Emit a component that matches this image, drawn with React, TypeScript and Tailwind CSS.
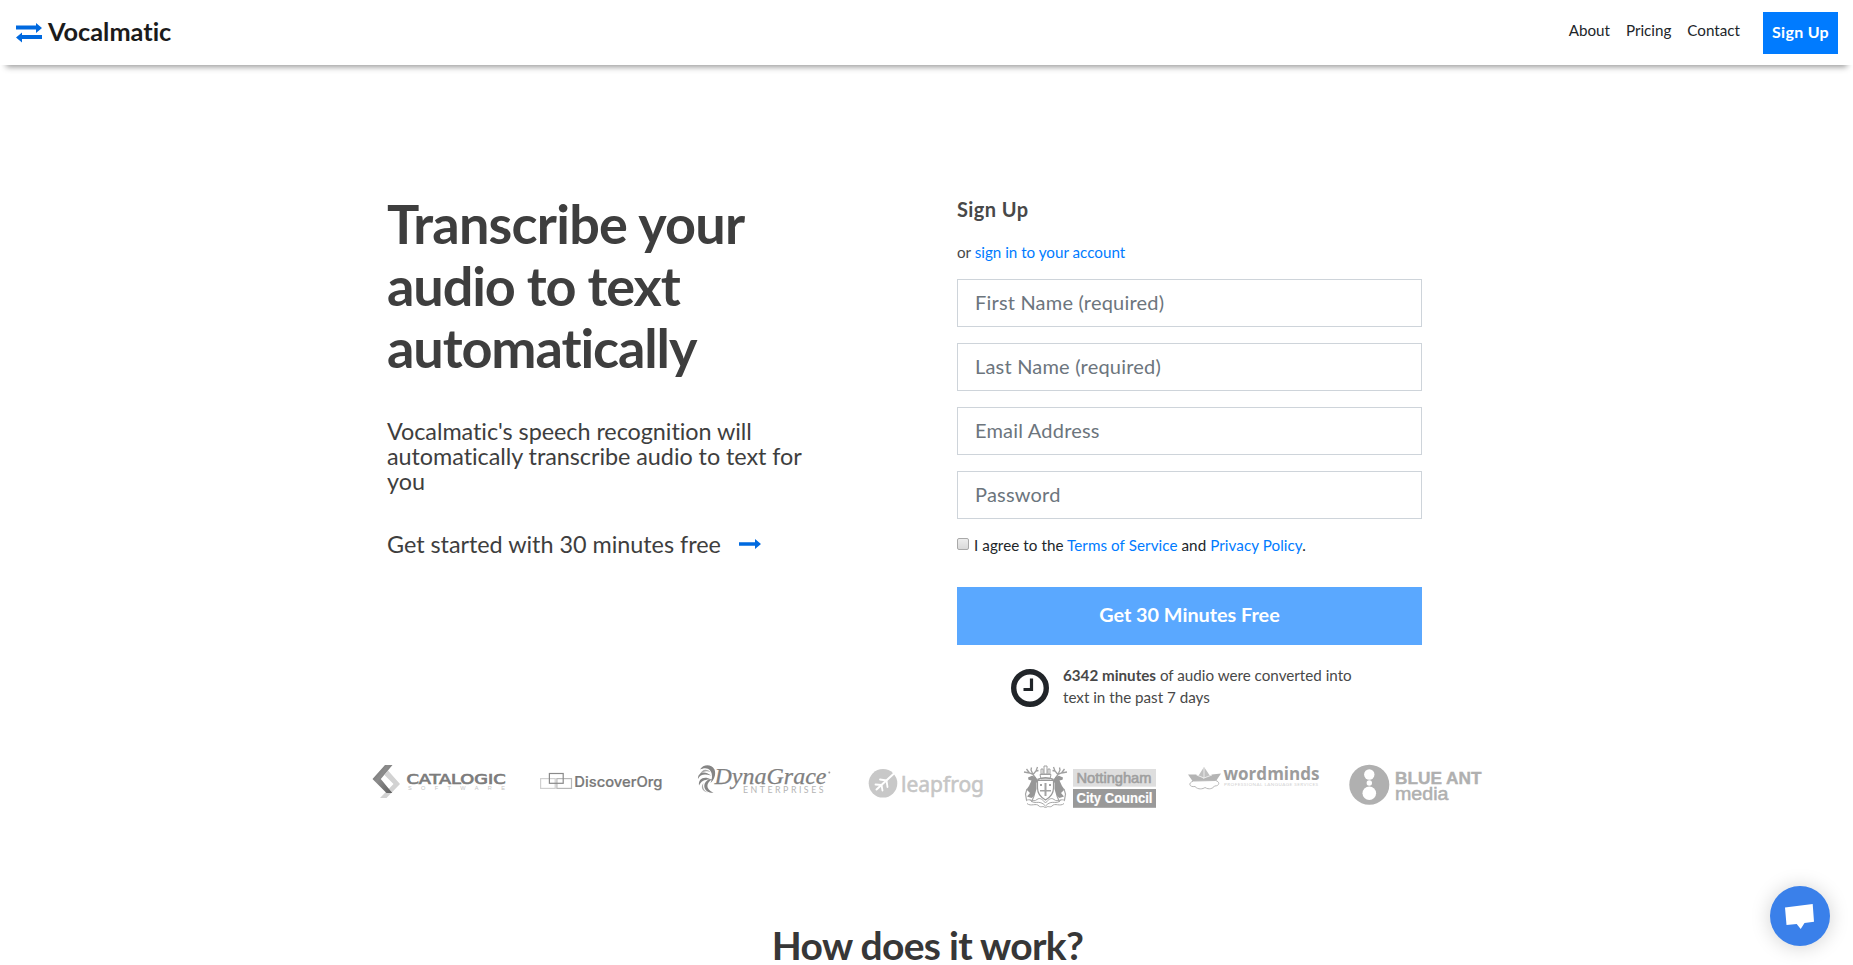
import type { ReactNode } from "react";

function Logo({ x, w, label, children }: { x: number; w: number; label: string; children: ReactNode }) {
  return (
    <svg width={w} height={48} viewBox={`${x} 764 ${w} 48`} role="img" aria-label={label} className="shrink-0">
      {children}
    </svg>
  );
}

function Catalogic() {
  return (
    <Logo x={370} w={138} label="Catalogic Software">
      <defs>
        <linearGradient id="cat" x1="0" x2="1" y1="0" y2="1">
          <stop offset="0" stopColor="#6c6c6c" />
          <stop offset="0.4" stopColor="#8c8c8c" />
          <stop offset="1" stopColor="#5e5e5e" />
        </linearGradient>
      </defs>
      <path d="M388 770.5L400 784L386.5 798H380L393.5 784L384.5 775Z" fill="#d2d2d2" />
      <path d="M385 765H392.5L380.8 779L392.3 793H386.5L372.5 779Z" fill="url(#cat)" />
      <text x="406.5" y="784" fontSize="13.2" fontFamily="DejaVu Sans" fill="#7c7c7c" stroke="#7c7c7c" strokeWidth=".7" textLength="99" lengthAdjust="spacingAndGlyphs">CATALOGIC</text>
      <text x="408" y="790.3" fontSize="5.6" fontFamily="Liberation Sans" fill="#c4c4c4" textLength="97">SOFTWARE</text>
    </Logo>
  );
}

function DiscoverOrg() {
  return (
    <Logo x={538} w={126} label="DiscoverOrg">
      <g fill="none" strokeWidth="1.2">
        <rect x="540.6" y="778.6" width="14.6" height="9.8" stroke="#d0d0d0" />
        <rect x="556.9" y="778.6" width="14.6" height="9.8" stroke="#b8b8b8" />
        <rect x="549.4" y="773.5" width="13.8" height="9.8" stroke="#8a8a8a" />
      </g>
      <text x="574.3" y="787" fontSize="14.6" fontWeight="500" fontFamily="Inter" fill="#787878" stroke="#787878" strokeWidth=".2" textLength="88" lengthAdjust="spacingAndGlyphs">DiscoverOrg</text>
    </Logo>
  );
}

function DynaGrace() {
  return (
    <Logo x={696} w={138} label="DynaGrace Enterprises">
      <g fill="#858585">
        <path d="M700 769.5C703 764.5 711 763.5 714.5 769.5C716 773.5 715 779 710.5 783C713 777 712.500 771 708 768.700C705.500 767.600 702.500 768.200 700 769.500Z" />
        <path d="M698 779C697.500 773 704 769.500 711 775.500C705 773.500 700 774 698 779Z" />
        <path d="M700 775C701 770 706 768 710.500 772C706 770.500 703 771.500 700 775Z" opacity=".7" />
        <path d="M699 785.500C698 779 704 775.500 711 779.500C705 779 701 781 699 785.500Z" />
        <path d="M712.500 779C706 783 705 789 713.500 792.800C705 793.500 700.500 784.500 708.500 779.500Z" />
        <path d="M703.500 783C702 787 704 791 708 792.500C702.500 792 700 787 703.500 783Z" opacity=".7" />
      </g>
      <text x="714.5" y="783.8" fontSize="24" fontStyle="italic" fontFamily="Liberation Serif" fill="#808080" stroke="#808080" strokeWidth=".25" textLength="112" lengthAdjust="spacingAndGlyphs">DynaGrace</text>
      <circle cx="829.3" cy="772.6" r="1" fill="#999" />
      <text x="743" y="792.7" fontSize="8.8" fontFamily="Lato" fill="#b4b4b4" textLength="80.500">ENTERPRISES</text>
    </Logo>
  );
}

function Leapfrog() {
  return (
    <Logo x={867} w={118} label="leapfrog">
      <circle cx="883" cy="783.3" r="14.3" fill="#c8c8c8" />
      <g fill="none" stroke="#fff" strokeLinecap="round" strokeLinejoin="round">
        <path d="M876.500 789.500L894 773.500" strokeWidth="2" />
        <path d="M880 779.500L886.500 780.500L887.500 787" strokeWidth="1.8" />
        <path d="M875.500 784.500L881.500 785L882.500 790.500" strokeWidth="1.8" />
      </g>
      <text x="901" y="791.5" fontSize="22" fontFamily="Noto Sans" fill="#c6c6c6" stroke="#c6c6c6" strokeWidth=".6" textLength="83" lengthAdjust="spacingAndGlyphs">leapfrog</text>
    </Logo>
  );
}

function CrestSide() {
  return (
    <g>
      <path d="M1035.500 778L1033 774.500L1029.500 773L1024 772M1033 774.500L1031 770L1031.500 767.500M1029.500 773L1026.500 769M1033.500 774L1036 771L1037.500 767M1036 771L1038.500 770.500" fill="none" stroke="#a0a0a0" strokeWidth="1.3" />
      <path d="M1028 777.500L1032 775.800L1035.500 777L1038 780L1036.500 783V789L1034.500 796L1031.500 798L1027 796.500L1030 793L1026.500 789.500L1029 786L1031.500 780.500L1028.500 779.800Z" fill="#979797" />
      <path d="M1027 789L1025.500 794L1026.500 800M1034 796L1031.500 802" fill="none" stroke="#a6a6a6" strokeWidth="1.2" />
      <path d="M1026 801C1029 797.500 1033 803 1037 799.500C1040 797 1043 800 1045.500 803M1027 803.500C1031 807 1036 802.500 1039 806C1041 808 1043.500 805 1045.500 808M1030 799.500C1034 806 1039 798.500 1045.500 806" fill="none" stroke="#a8a8a8" strokeWidth="1" />
    </g>
  );
}

function Nottingham() {
  return (
    <Logo x={1020} w={138} label="Nottingham City Council">
      <CrestSide />
      <g transform="translate(2091 0) scale(-1 1)">
        <CrestSide />
      </g>
      <path d="M1037.500 780.500H1053.500V788C1053.500 794 1050 797.500 1045.500 800C1041 797.500 1037.500 794 1037.500 788Z" fill="#fff" stroke="#999" strokeWidth="1.2" />
      <path d="M1044.500 783V790H1040V791.500H1044.500V796H1046.500V791.500H1051V790H1046.500V783ZM1040 784H1042V786H1040ZM1049 784H1051V786H1049Z" fill="#a4a4a4" />
      <path d="M1040 774.500H1051L1050 779H1041ZM1041 769H1043V774H1041ZM1048 769H1050V774H1048ZM1044 766H1047V774H1044Z" fill="none" stroke="#a0a0a0" strokeWidth="1" />
      <path d="M1037.500 779.500Q1045.500 776 1053.500 779.500" fill="none" stroke="#999" strokeWidth="1.4" />
      <rect x="1073" y="769" width="83" height="17.700" fill="#dedede" />
      <rect x="1073" y="789" width="83" height="18.800" fill="#999" />
      <text x="1076.500" y="782.700" fontSize="14.5" fontFamily="Liberation Sans" fill="#9f9f9f" stroke="#9f9f9f" strokeWidth=".6" textLength="75" lengthAdjust="spacingAndGlyphs">Nottingham</text>
      <text x="1076.500" y="802.900" fontSize="14.5" fontWeight="700" fontFamily="Liberation Sans" fill="#fff" stroke="#fff" strokeWidth=".2" textLength="76" lengthAdjust="spacingAndGlyphs">City Council</text>
    </Logo>
  );
}

function Wordminds() {
  return (
    <Logo x={1186} w={136} label="wordminds professional language services">
      <path d="M1204 767L1211.500 778H1197Z" fill="#c0c0c0" />
      <path d="M1188 774.500L1196 774.500L1203.500 778.500L1212 774.500L1221 773.500L1216 781H1192.500Z" fill="#b4b4b4" />
      <path d="M1204 768V778L1196.500 775M1204 778L1212 775" fill="none" stroke="#efefef" strokeWidth=".9" />
      <path d="M1193.500 781C1187.500 783 1189.500 787.500 1195 786.500C1198 790 1203 789 1205 787.500C1209 790 1213 788.500 1214.500 786C1220 786 1220 781.500 1215.500 780.500Z" fill="#fff" stroke="#b8b8b8" strokeWidth="1" />
      <text x="1223.500" y="780.200" fontSize="17.800" fontWeight="700" fontFamily="Open Sans" fill="#9c9c9c" textLength="96" lengthAdjust="spacingAndGlyphs">wordminds</text>
      <text x="1224" y="786.300" fontSize="4.600" fontFamily="Lato" fill="#d0d0d0" textLength="94">PROFESSIONAL LANGUAGE SERVICES</text>
    </Logo>
  );
}

function BlueAnt() {
  return (
    <Logo x={1347} w={138} label="Blue Ant Media">
      <circle cx="1369.300" cy="784.700" r="20" fill="#b0b0b0" />
      <circle cx="1369.300" cy="774.500" r="5.200" fill="#fff" />
      <circle cx="1369.300" cy="783" r="2.700" fill="#fff" />
      <circle cx="1369.300" cy="793.300" r="6.800" fill="#fff" />
      <text x="1395" y="784.200" fontSize="17.300" fontWeight="700" fontFamily="Liberation Sans" fill="#b0b0b0" stroke="#b0b0b0" strokeWidth=".4" textLength="86.500" lengthAdjust="spacingAndGlyphs">BLUE ANT</text>
      <text x="1395" y="800" fontSize="18" fontFamily="Liberation Sans" fill="#b0b0b0" stroke="#b0b0b0" strokeWidth=".5" textLength="53.500" lengthAdjust="spacingAndGlyphs">media</text>
    </Logo>
  );
}

const fields = ["First Name (required)", "Last Name (required)", "Email Address", "Password"];

export default function App() {
  return (
    <div className="relative flex h-[965px] w-full flex-col overflow-hidden bg-white font-['Lato',sans-serif] text-[15.2px] text-[#212529] [font-variant-ligatures:none]">
      <header className="flex h-[65px] shrink-0 items-start justify-between pr-[15px] pl-4 shadow-[0_8px_6px_-6px_#999]">
        <a className="flex items-start gap-1.5 pt-4">
          <svg width="26" height="20" viewBox="0 0 26 20" fill="#0069df" className="mt-[7px]">
            <path d="M0 2.500H20V0L26 5L20 10V6.500H0Z" />
            <path d="M26 12H6V9.500L0 14.500L6 19.500V16H26Z" />
          </svg>
          <span className="text-[25.3px] leading-[30px] font-bold text-[#1b1b1b]">Vocalmatic</span>
        </a>
        <nav className="flex items-start pt-3">
          <a className="mr-4 pt-[7px] leading-[23px]">About</a>
          <a className="mr-4 pt-[7px] leading-[23px]">Pricing</a>
          <a className="mr-[23px] pt-[7px] leading-[23px]">Contact</a>
          <a className="flex h-[42px] w-[75px] items-center justify-center bg-[#007bff] pb-0.5 text-base font-bold tracking-[0.3px] text-white">
            Sign Up
          </a>
        </nav>
      </header>

      <main className="flex flex-col">
        <section className="flex gap-[150px] pt-[126px] pl-[387px]">
          <div className="w-[420px] text-[#3e3e3e]">
            <h1 className="pt-0.5 text-[54px] leading-[62px] font-bold tracking-[-1.1px]">
              <span className="tracking-[-0.75px]">Transcribe your</span>
              <br />
              audio to text
              <br />
              automatically
            </h1>
            <p className="mt-10 text-[23.4px] leading-[25.2px] tracking-[-0.05px]">
              Vocalmatic's speech recognition will automatically transcribe audio to text for you
            </p>
            <p className="mt-[37px] flex items-center text-[23.4px] leading-[25.2px] tracking-[-0.03px]">
              Get started with 30 minutes free
              <svg width="22" height="12" viewBox="0 0 22 12" fill="#006ae0" className="ml-[18px]">
                <path d="M0 4.300H16V1L22 6L16 11V7.700H0Z" />
              </svg>
            </p>
          </div>

          <form className="w-[465px] pt-1.5">
            <h2 className="text-xl leading-6 font-bold tracking-[0.4px] text-[#484848]">Sign Up</h2>
            <p className="mt-5 leading-[23px] text-[#484848]">
              or <a className="text-[#007bff]">sign in to your account</a>
            </p>
            <div className="mt-[15px] flex flex-col gap-4">
              {fields.map((f) => (
                <input
                  key={f}
                  placeholder={f}
                  className="h-12 w-full border border-[#ced4da] px-[17px] pb-0.5 text-xl tracking-[0.2px] placeholder:text-[#6c757d]"
                />
              ))}
            </div>
            <label className="mt-[15px] flex items-center gap-[5px] leading-[23px]">
              <input
                type="checkbox"
                className="-mt-[3px] size-3 appearance-none rounded-[2px] border border-[#a9a9a9] bg-linear-to-b from-[#ededed] to-[#d9d9d9]"
              />
              <span className="tracking-[0.07px]">
                I agree to the <a className="text-[#007bff]">Terms of Service</a> and <a className="text-[#007bff]">Privacy Policy</a>.
              </span>
            </label>
            <button type="button" className="mt-[30px] block h-[58px] w-full bg-[#5aa8ff] pb-0.5 text-[19.8px] font-bold text-white">
              Get 30 Minutes Free
            </button>
            <div className="mt-[19px] flex gap-[14px] pl-[54px]">
              <svg width="38" height="38" viewBox="0 0 38 38" fill="none" stroke="#212529" className="mt-[5px]">
                <circle cx="19" cy="19" r="16.300" strokeWidth="5.400" />
                <path d="M20.500 9.500V20.500H12.500" strokeWidth="3.200" />
              </svg>
              <p className="h-11 w-[310px] leading-[22px] text-[#484848]">
                <b>6342 minutes</b> of audio were converted into
                <br />
                text in the past 7 days
              </p>
            </div>
          </form>
        </section>

        <section className="mt-14 flex pl-[370px]">
          <Catalogic />
          <div className="w-[30px]" />
          <DiscoverOrg />
          <div className="w-8" />
          <DynaGrace />
          <div className="w-[33px]" />
          <Leapfrog />
          <div className="w-[35px]" />
          <Nottingham />
          <div className="w-7" />
          <Wordminds />
          <div className="w-[25px]" />
          <BlueAnt />
        </section>

        <h2 className="mt-[109px] pl-0.5 text-center text-[39px] leading-[48px] font-bold tracking-[-0.7px] text-[#373737]">
          How does it work?
        </h2>
      </main>

      <button
        type="button"
        aria-label="Open chat"
        className="absolute right-[23px] bottom-[19px] size-[60px] rounded-full bg-[#3a80ea] shadow-[0_1px_20px_rgba(0,0,0,0.18)]"
      >
        <svg width="60" height="60" viewBox="0 0 60 60" fill="#fff">
          <path d="M15 21.500L42.700 18L44 35.700L34.500 37L30.700 43L26.700 38L16.500 39Z" />
        </svg>
      </button>
    </div>
  );
}
